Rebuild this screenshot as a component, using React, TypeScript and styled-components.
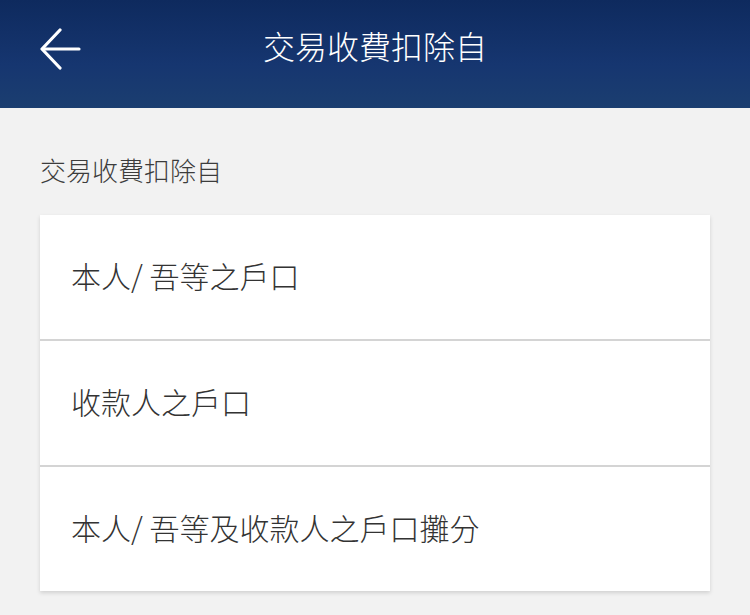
import React from 'react';
import styled, { createGlobalStyle } from 'styled-components';

const GlobalStyle = createGlobalStyle`
  html, body {
    margin: 0;
    padding: 0;
    background: #f2f2f2;
    font-family: "Noto Sans CJK TC", "Noto Sans", sans-serif;
  }
`;

const Page = styled.div`
  width: 750px;
  min-height: 615px;
  background: #f2f2f2;
`;

const Header = styled.header`
  height: 108px;
  position: relative;
  display: flex;
  align-items: center;
  justify-content: center;
  background: linear-gradient(to bottom, #0e2a5e 0%, #163670 60%, #1b3e70 100%);
`;

const BackButton = styled.button`
  position: absolute;
  left: 37px;
  top: 26px;
  width: 46px;
  height: 46px;
  padding: 0;
  border: 0;
  background: transparent;
  display: flex;
  align-items: center;
  justify-content: center;
  cursor: pointer;
`;

const Title = styled.h1`
  margin: 0 0 18px;
  color: #ffffff;
  font-size: 32px;
  font-weight: 300;
  letter-spacing: 0;
`;

const Content = styled.main`
  padding: 0 40px;
`;

const SectionLabel = styled.div`
  margin: 44px 0 27px;
  line-height: 36px;
  font-size: 26px;
  font-weight: 300;
  color: #3c3c3c;
`;

const Card = styled.div`
  background: #ffffff;
  box-shadow: 0 2px 4px rgba(0, 0, 0, 0.14);
`;

const Option = styled.div<{ last?: boolean }>`
  height: 120px;
  display: flex;
  align-items: center;
  padding: 0 0 4px 31px;
  font-size: 30px;
  font-weight: 300;
  color: #333333;
  border-bottom: ${(p) => (p.last ? 'none' : '2px solid #d4d4d4')};
  cursor: pointer;
`;

const options = ['本人/ 吾等之戶口', '收款人之戶口', '本人/ 吾等及收款人之戶口攤分'];

const App: React.FC = () => {
  return (
    <Page>
      <GlobalStyle />
      <Header>
        <BackButton aria-label="back">
          <svg width="42" height="42" viewBox="0 0 42 42" fill="none">
            <path d="M40 21H4" stroke="#fff" strokeWidth="3.2" strokeLinecap="round" />
            <path d="M21 2L3 21L21 40" stroke="#fff" strokeWidth="3.2" strokeLinecap="round" strokeLinejoin="round" />
          </svg>
        </BackButton>
        <Title>交易收費扣除自</Title>
      </Header>
      <Content>
        <SectionLabel>交易收費扣除自</SectionLabel>
        <Card>
          {options.map((o, i) => (
            <Option key={o} last={i === options.length - 1}>
              {o}
            </Option>
          ))}
        </Card>
      </Content>
    </Page>
  );
};

export default App;
